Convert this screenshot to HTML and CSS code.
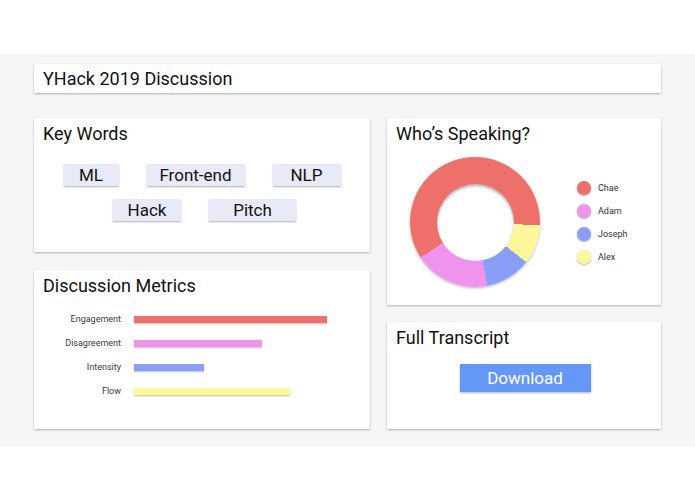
FILE: index.html
```html
<!DOCTYPE html>
<html lang="en">
<head>
<meta charset="utf-8">
<title>YHack 2019 Discussion</title>
<link rel="stylesheet" href="styles.css">
</head>
<body>
<div class="page">
  <div class="card header">YHack 2019 Discussion</div>
  <div class="grid">
    <div class="col col-left">
      <section class="card keywords">
        <h2 class="title">Key Words</h2>
        <div class="chips">
          <span class="chip chip-ml">ML</span>
          <span class="chip chip-fe">Front-end</span>
          <span class="chip chip-nlp">NLP</span>
          <span class="chip chip-hack">Hack</span>
          <span class="chip chip-pitch">Pitch</span>
        </div>
      </section>
      <section class="card metrics">
        <h2 class="title">Discussion Metrics</h2>
        <div class="rows">
          <div class="row"><span class="label">Engagement</span><span class="bar red" style="width:193px"></span></div>
          <div class="row"><span class="label">Disagreement</span><span class="bar pink" style="width:128px"></span></div>
          <div class="row"><span class="label">Intensity</span><span class="bar blue" style="width:70px"></span></div>
          <div class="row"><span class="label">Flow</span><span class="bar yellow" style="width:156px"></span></div>
        </div>
      </section>
    </div>
    <div class="col col-right">
      <section class="card speaking">
        <h2 class="title">Who’s Speaking?</h2>
        <div class="speak-body">
          <div class="donut"><div class="hole"></div></div>
          <ul class="legend">
            <li><span class="dot red"></span>Chae</li>
            <li><span class="dot pink"></span>Adam</li>
            <li><span class="dot blue"></span>Joseph</li>
            <li><span class="dot yellow"></span>Alex</li>
          </ul>
        </div>
      </section>
      <section class="card transcript">
        <h2 class="title">Full Transcript</h2>
        <div class="btn-wrap"><button class="download">Download</button></div>
      </section>
    </div>
  </div>
</div>
</body>
</html>
```

FILE: styles.css
```css
* { box-sizing: border-box; }
html, body { margin: 0; padding: 0; background: #ffffff; }
body { font-family: Roboto, "Liberation Sans", Arial, sans-serif; color: #111; }

.page {
  margin-top: 54px;
  background: #f6f6f6;
  padding: 10px 34px 18px;
  height: 393px;
}

.card {
  background: #ffffff;
  box-shadow: 0 1px 2px rgba(0,0,0,0.28);
}

.header {
  height: 29px;
  line-height: 29px;
  padding-left: 9px;
  font-size: 18px;
  color: #111;
}

.grid {
  margin-top: 25px;
  display: grid;
  grid-template-columns: 336px 274px;
  column-gap: 17px;
}

.col { display: flex; flex-direction: column; }
.col-left { gap: 18px; }
.col-right { gap: 17px; }

.title {
  margin: 0;
  padding: 5px 9px 0;
  font-size: 18px;
  line-height: 21px;
  font-weight: 400;
  color: #111;
}

.keywords { height: 134px; }
.chips {
  margin-top: 20px;
  display: flex;
  flex-wrap: wrap;
  justify-content: center;
  column-gap: 28px;
  row-gap: 13px;
  padding: 0 20px;
}
.chip {
  background: #e9eaf8;
  height: 22px;
  line-height: 22px;
  font-size: 17px;
  text-align: center;
  color: #111;
  box-shadow: 0 1px 1.5px rgba(0,0,0,0.3);
}
.chip-ml { width: 55px; }
.chip-fe { width: 98px; }
.chip-nlp { width: 68px; }
.chip-hack { width: 68px; margin-left: 5px; }
.chip-pitch { width: 87px; }

.metrics { height: 159px; }
.rows { margin-top: 11px; }
.row {
  height: 24px;
  display: flex;
  align-items: center;
}
.label {
  width: 87px;
  text-align: right;
  font-size: 9px;
  color: #3a3a3a;
  margin-right: 13px;
}
.bar {
  height: 7px;
  box-shadow: 0 1px 1.5px rgba(0,0,0,0.25);
}

.red { background: #ed706a; }
.pink { background: #f093ec; }
.blue { background: #899ef6; }
.yellow { background: #fdf99b; }

.speaking { height: 187px; }
.speak-body {
  margin-top: 13px;
  padding-left: 23px;
  display: flex;
  align-items: center;
  gap: 37px;
}
.donut {
  width: 130px;
  height: 130px;
  border-radius: 50%;
  background: conic-gradient(#ed706a 0deg 93deg, #fdf99b 93deg 128deg, #899ef6 128deg 169deg, #f093ec 169deg 237deg, #ed706a 237deg 360deg);
  box-shadow: 0 1px 3px rgba(0,0,0,0.3);
  display: flex;
  align-items: center;
  justify-content: center;
}
.hole {
  width: 77px;
  height: 77px;
  border-radius: 50%;
  background: #ffffff;
  box-shadow: inset 0 2px 3px rgba(0,0,0,0.3);
}
.legend {
  list-style: none;
  margin: 0;
  padding: 0;
}
.legend li {
  height: 23px;
  display: flex;
  align-items: center;
  font-size: 9px;
  color: #333;
}
.dot {
  width: 14px;
  height: 14px;
  border-radius: 50%;
  margin-right: 7px;
  box-shadow: 0 1px 2px rgba(0,0,0,0.3);
}

.transcript { height: 107px; }
.btn-wrap {
  margin-top: 16px;
  display: flex;
  justify-content: center;
  padding-left: 2px;
}
.download {
  width: 131px;
  height: 28px;
  border: none;
  background: #6598f6;
  color: #ffffff;
  font-family: Roboto, "Liberation Sans", Arial, sans-serif;
  font-size: 17px;
  padding: 0;
  box-shadow: 0 1px 2px rgba(0,0,0,0.3);
}
```
